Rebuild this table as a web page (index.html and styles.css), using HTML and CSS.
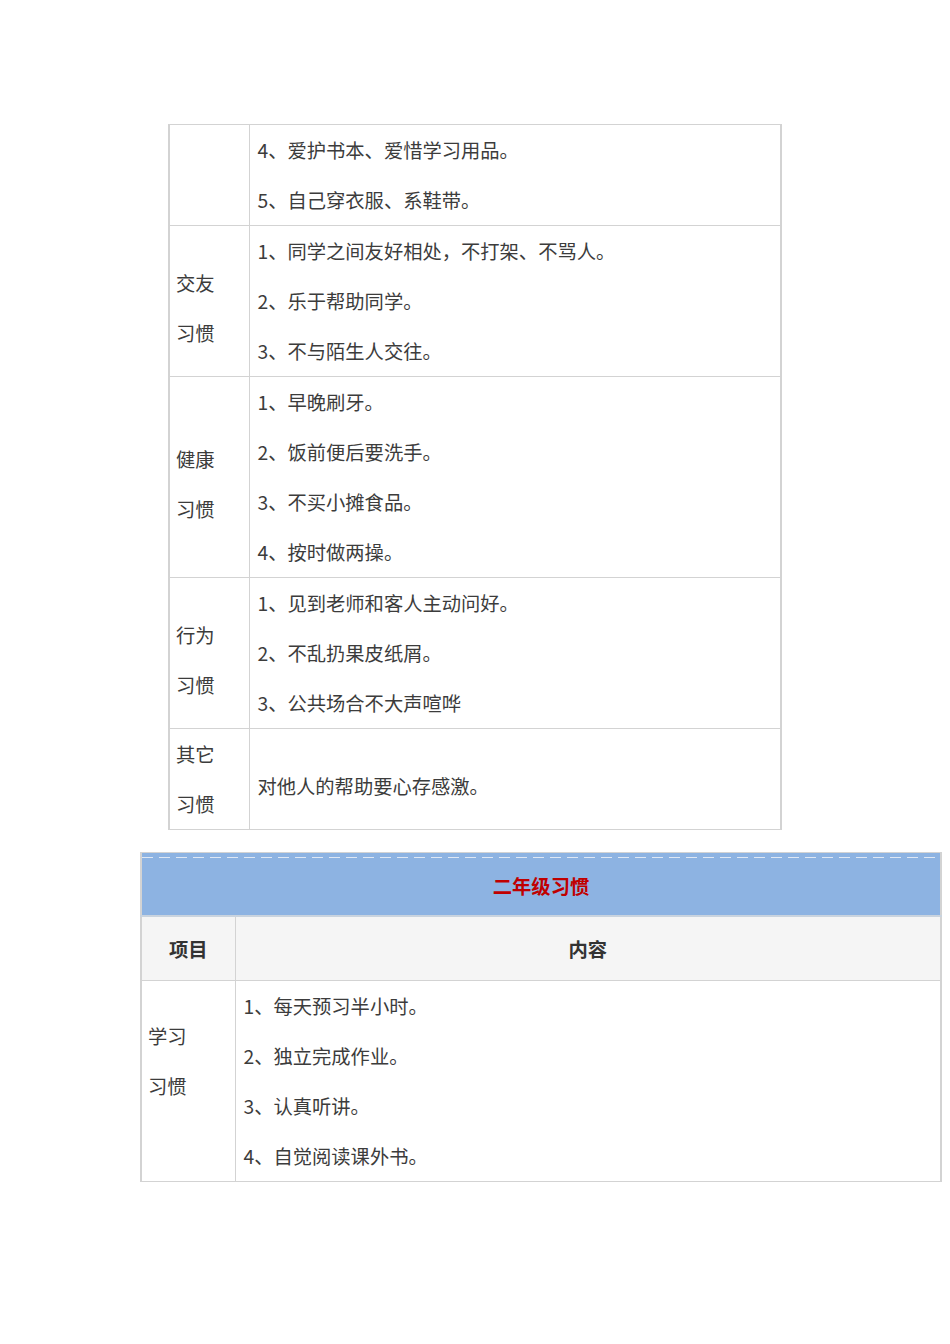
FILE: index.html
```html
<!DOCTYPE html>
<html lang="zh">
<head>
<meta charset="utf-8">
<title>习惯</title>
<link rel="stylesheet" href="styles.css">
</head>
<body>
<div class="page">
  <table class="t1">
    <colgroup><col class="c1"><col></colgroup>
    <tr>
      <td class="label"></td>
      <td class="content">
        <div class="ln">4、爱护书本、爱惜学习用品。</div>
        <div class="ln">5、自己穿衣服、系鞋带。</div>
      </td>
    </tr>
    <tr>
      <td class="label shift"><div class="ln">交友</div><div class="ln">习惯</div></td>
      <td class="content">
        <div class="ln">1、同学之间友好相处，不打架、不骂人。</div>
        <div class="ln">2、乐于帮助同学。</div>
        <div class="ln">3、不与陌生人交往。</div>
      </td>
    </tr>
    <tr>
      <td class="label shift"><div class="ln">健康</div><div class="ln">习惯</div></td>
      <td class="content">
        <div class="ln">1、早晚刷牙。</div>
        <div class="ln">2、饭前便后要洗手。</div>
        <div class="ln">3、不买小摊食品。</div>
        <div class="ln">4、按时做两操。</div>
      </td>
    </tr>
    <tr>
      <td class="label shift"><div class="ln">行为</div><div class="ln">习惯</div></td>
      <td class="content">
        <div class="ln">1、见到老师和客人主动问好。</div>
        <div class="ln">2、不乱扔果皮纸屑。</div>
        <div class="ln">3、公共场合不大声喧哗</div>
      </td>
    </tr>
    <tr>
      <td class="label"><div class="ln">其它</div><div class="ln">习惯</div></td>
      <td class="content middle shift"><div class="ln">对他人的帮助要心存感激。</div></td>
    </tr>
  </table>

  <table class="t2">
    <colgroup><col class="c1"><col></colgroup>
    <tr>
      <td class="title" colspan="2"><div class="dash"></div><div class="title-text">二年级习惯</div></td>
    </tr>
    <tr class="head">
      <td>项目</td>
      <td>内容</td>
    </tr>
    <tr>
      <td class="label top"><div class="ln">学习</div><div class="ln">习惯</div></td>
      <td class="content">
        <div class="ln">1、每天预习半小时。</div>
        <div class="ln">2、独立完成作业。</div>
        <div class="ln">3、认真听讲。</div>
        <div class="ln">4、自觉阅读课外书。</div>
      </td>
    </tr>
  </table>
</div>
</body>
</html>
```

FILE: styles.css
```css
html, body {
  margin: 0;
  padding: 0;
  background: #ffffff;
}

body {
  font-family: "Noto Sans CJK SC", "Noto Sans", sans-serif;
  font-size: 19.3px;
  color: #3c3c3c;
}

.page {
  padding-top: 124px;
}

table {
  border-collapse: collapse;
  table-layout: fixed;
}

td {
  border: 1px solid #d3d3d3;
  padding: 0 8px;
}

.t1 {
  margin-left: 168px;
  width: 614px;
  border-left: 2px solid #d3d3d3;
  border-right: 2px solid #d3d3d3;
}

.t1 .c1 {
  width: 80px;
}

.t2 {
  margin-left: 140px;
  margin-top: 22px;
  width: 802px;
  border-left: 2px solid #d3d3d3;
  border-right: 2px solid #d3d3d3;
}

.t2 .c1 {
  width: 94px;
}

.ln {
  line-height: 50px;
  height: 50px;
  white-space: nowrap;
}

.label {
  vertical-align: middle;
  padding-left: 6px;
}

.label.top {
  vertical-align: top;
  padding-top: 30px;
}

.shift {
  padding-top: 14px;
}

.content {
  vertical-align: top;
}

.content.middle {
  vertical-align: middle;
}

.title {
  background: #8db3e2;
  height: 62px;
  padding: 0;
  text-align: center;
  vertical-align: top;
  border-bottom: 2px solid #c9d3de;
}

.dash {
  height: 1px;
  margin: 4px 0 0;
  background: repeating-linear-gradient(90deg, #dfe8f4 0 11px, transparent 11px 17px);
}

.title-text {
  font-weight: bold;
  color: #c00000;
  line-height: 56px;
  height: 56px;
}

.head td {
  background: #f5f5f5;
  height: 63px;
  text-align: center;
  vertical-align: middle;
  font-weight: bold;
  color: #333333;
  padding: 0;
}
```
